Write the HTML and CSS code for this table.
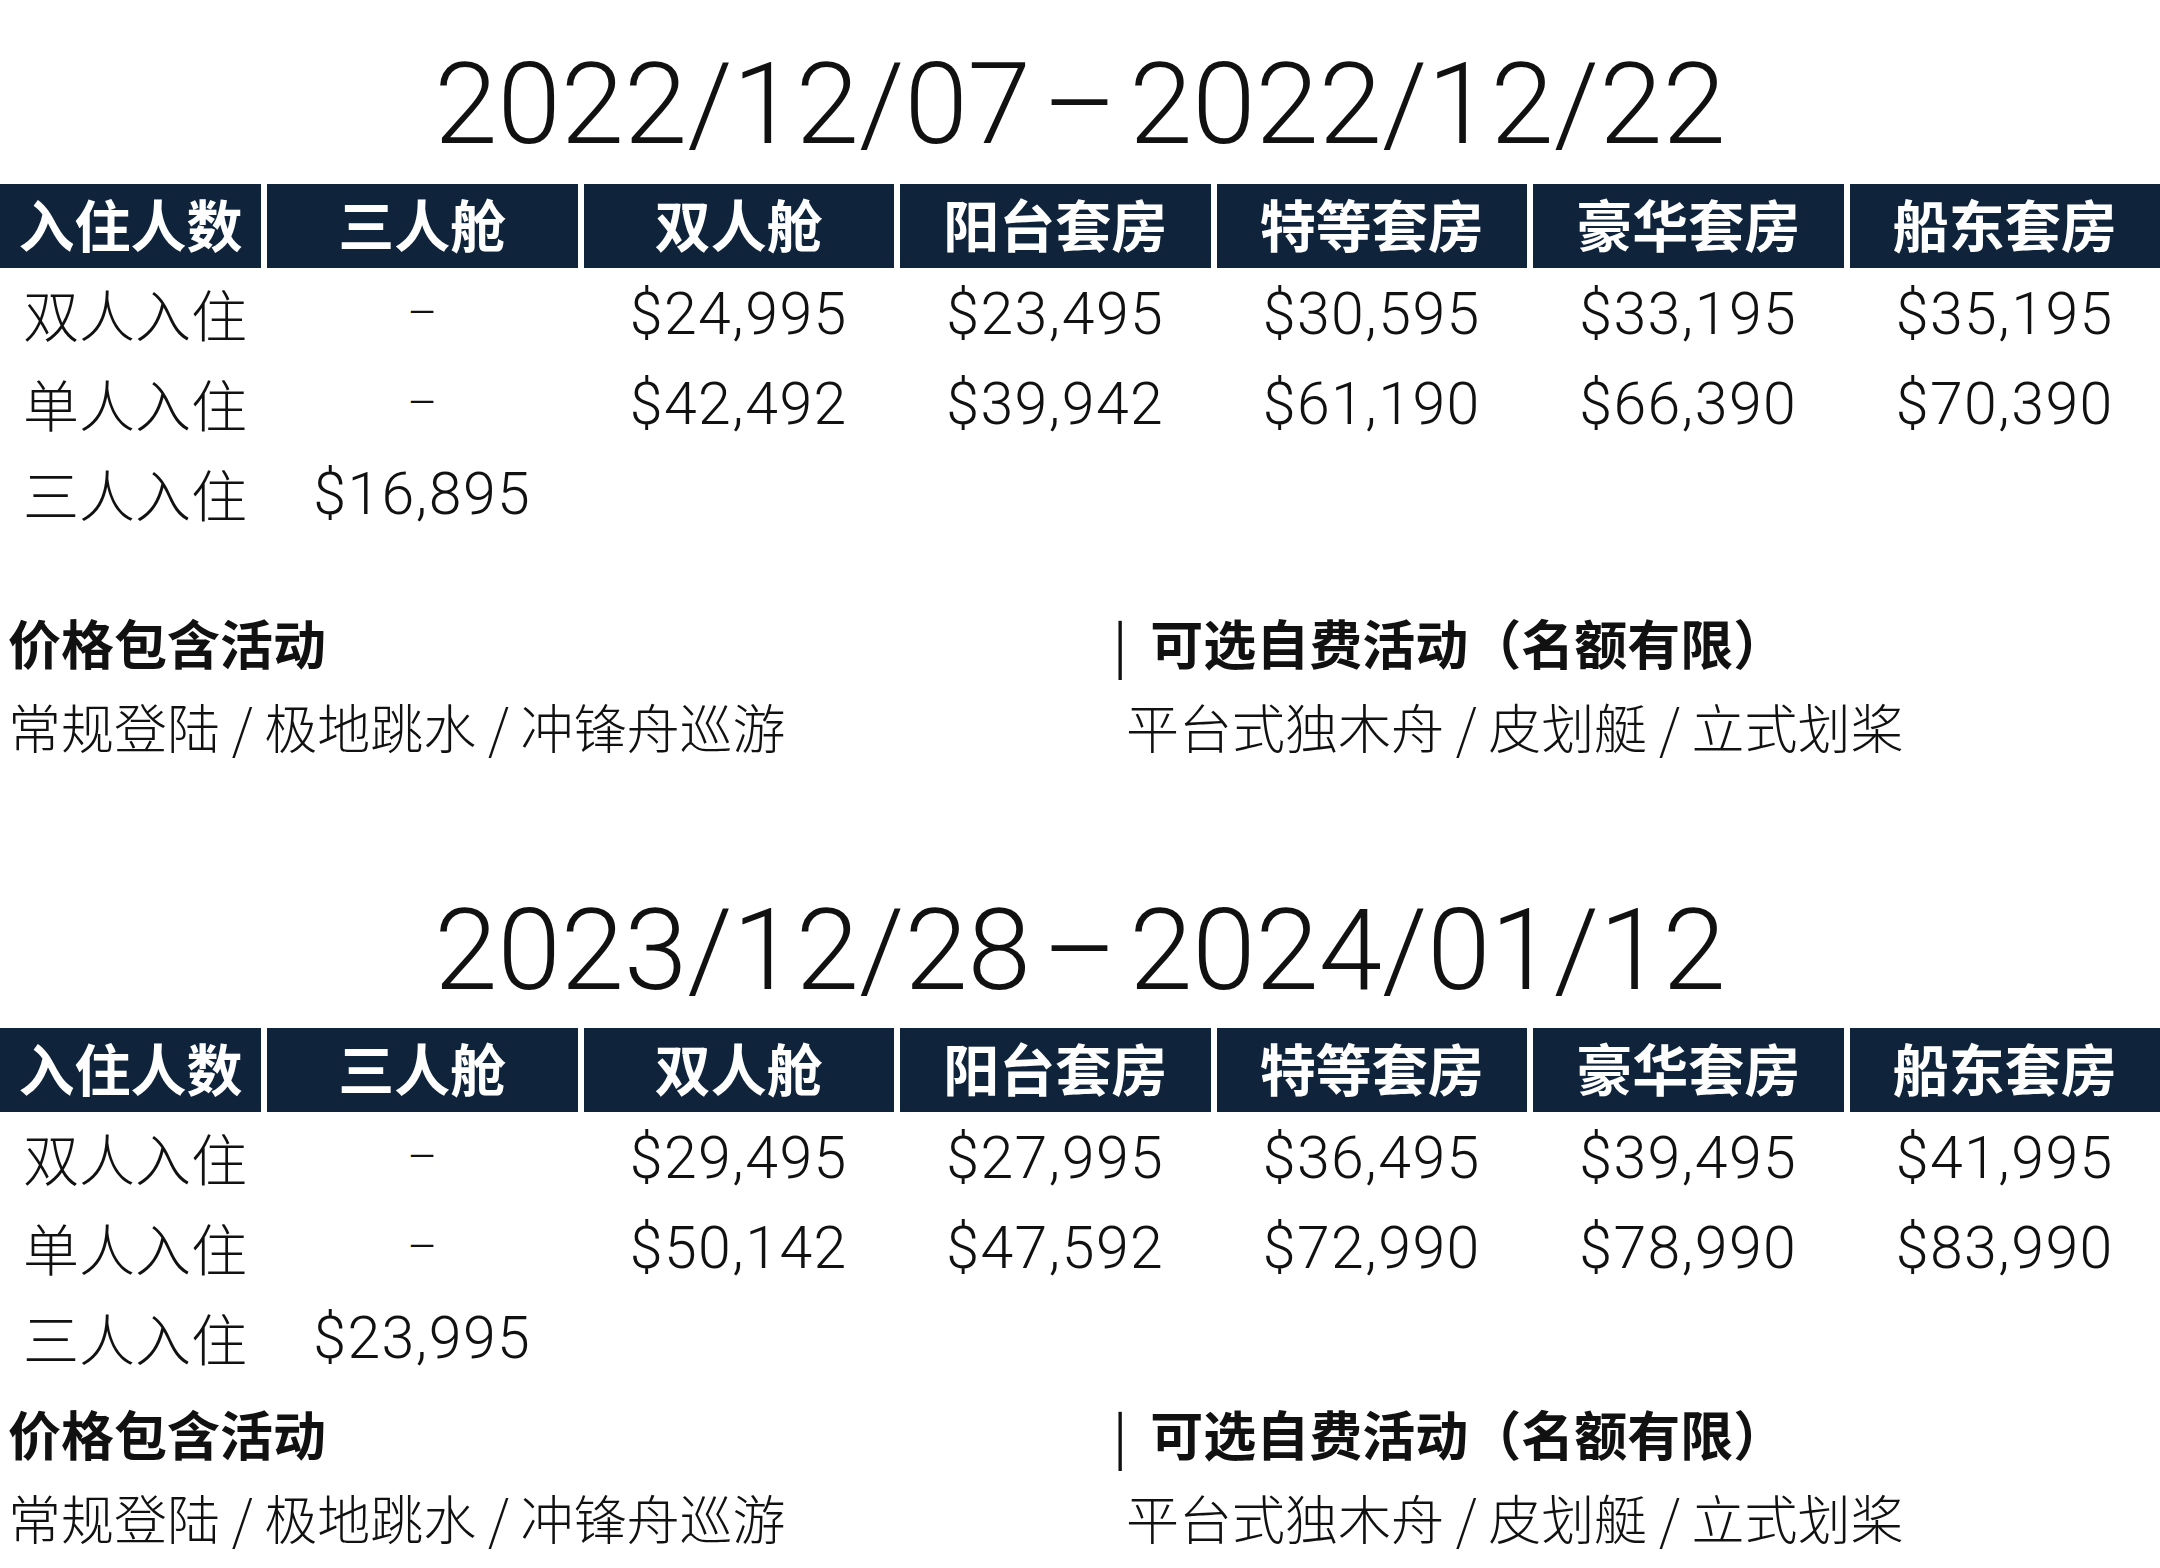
FILE: index.html
```html
<!DOCTYPE html>
<html lang="zh-CN">
<head>
<meta charset="utf-8">
<title>价格表</title>
<link rel="stylesheet" href="styles.css">
</head>
<body>
<section class="block">
  <h1 class="title">2022/12/07<span class="dash">–</span>2022/12/22</h1>
  <div class="table">
    <div class="row head">
      <div class="cell">入住人数</div>
      <div class="cell">三人舱</div>
      <div class="cell">双人舱</div>
      <div class="cell">阳台套房</div>
      <div class="cell">特等套房</div>
      <div class="cell">豪华套房</div>
      <div class="cell">船东套房</div>
    </div>
    <div class="row">
      <div class="cell label">双人入住</div>
      <div class="cell none">–</div>
      <div class="cell">$24,995</div>
      <div class="cell">$23,495</div>
      <div class="cell">$30,595</div>
      <div class="cell">$33,195</div>
      <div class="cell">$35,195</div>
    </div>
    <div class="row">
      <div class="cell label">单人入住</div>
      <div class="cell none">–</div>
      <div class="cell">$42,492</div>
      <div class="cell">$39,942</div>
      <div class="cell">$61,190</div>
      <div class="cell">$66,390</div>
      <div class="cell">$70,390</div>
    </div>
    <div class="row">
      <div class="cell label">三人入住</div>
      <div class="cell">$16,895</div>
    </div>
  </div>
  <div class="acts acts-first">
    <div class="act">
      <h2>价格包含活动</h2>
      <p>常规登陆 / 极地跳水 / 冲锋舟巡游</p>
    </div>
    <div class="act act-right">
      <h2><span class="bar">|</span>可选自费活动（名额有限）</h2>
      <p>平台式独木舟 / 皮划艇 / 立式划桨</p>
    </div>
  </div>
</section>

<section class="block">
  <h1 class="title">2023/12/28<span class="dash">–</span>2024/01/12</h1>
  <div class="table">
    <div class="row head">
      <div class="cell">入住人数</div>
      <div class="cell">三人舱</div>
      <div class="cell">双人舱</div>
      <div class="cell">阳台套房</div>
      <div class="cell">特等套房</div>
      <div class="cell">豪华套房</div>
      <div class="cell">船东套房</div>
    </div>
    <div class="row">
      <div class="cell label">双人入住</div>
      <div class="cell none">–</div>
      <div class="cell">$29,495</div>
      <div class="cell">$27,995</div>
      <div class="cell">$36,495</div>
      <div class="cell">$39,495</div>
      <div class="cell">$41,995</div>
    </div>
    <div class="row">
      <div class="cell label">单人入住</div>
      <div class="cell none">–</div>
      <div class="cell">$50,142</div>
      <div class="cell">$47,592</div>
      <div class="cell">$72,990</div>
      <div class="cell">$78,990</div>
      <div class="cell">$83,990</div>
    </div>
    <div class="row">
      <div class="cell label">三人入住</div>
      <div class="cell">$23,995</div>
    </div>
  </div>
  <div class="acts acts-second">
    <div class="act">
      <h2>价格包含活动</h2>
      <p>常规登陆 / 极地跳水 / 冲锋舟巡游</p>
    </div>
    <div class="act act-right">
      <h2><span class="bar">|</span>可选自费活动（名额有限）</h2>
      <p>平台式独木舟 / 皮划艇 / 立式划桨</p>
    </div>
  </div>
</section>
</body>
</html>
```

FILE: styles.css
```css
html, body {
  margin: 0;
  padding: 0;
  background: #ffffff;
}

body {
  width: 2160px;
  color: #111111;
  font-family: "Roboto", "Noto Sans CJK SC", sans-serif;
  overflow: hidden;
}

.block + .block {
  margin-top: 76px;
}

.title {
  margin: 0;
  height: 160px;
  padding-top: 24px;
  display: flex;
  align-items: center;
  justify-content: center;
  font-family: "Roboto", sans-serif;
  font-weight: 300;
  font-size: 114px;
  line-height: 1;
  color: #111111;
}

.block + .block .title {
  height: 156px;
  padding-top: 28px;
}

.dash {
  padding: 0 12px;
}

.row {
  display: grid;
  grid-template-columns: 261px repeat(6, 1fr);
  grid-template-rows: 90px;
  column-gap: 6px;
  height: 90px;
}

.row.head {
  grid-template-rows: 84px;
  height: 84px;
}

.cell {
  display: flex;
  align-items: center;
  justify-content: center;
  font-family: "Roboto", "Noto Sans CJK SC", sans-serif;
  font-weight: 300;
  font-size: 59px;
  line-height: 1;
  letter-spacing: 1.5px;
  white-space: nowrap;
}

.cell.none {
  font-size: 46px;
  letter-spacing: 0;
}

.head .cell {
  background: #0f243b;
  color: #ffffff;
  font-family: "Noto Sans CJK SC", sans-serif;
  font-weight: 700;
  font-size: 56px;
  letter-spacing: 0;
  padding-bottom: 6px;
}

.cell.label {
  justify-content: flex-start;
  padding-left: 23px;
  font-family: "Noto Sans CJK SC", sans-serif;
  font-weight: 300;
  font-size: 56px;
  letter-spacing: 0;
}

.acts {
  display: grid;
  grid-template-columns: 1113px 1fr;
}

.acts-first {
  margin-top: 62px;
}

.acts-second {
  margin-top: 9px;
}

.act h2,
.act p {
  margin: 0;
  height: 84px;
  display: flex;
  align-items: center;
  font-family: "Noto Sans CJK SC", sans-serif;
  font-size: 53px;
  white-space: pre;
  padding-left: 8px;
}

.act h2 {
  font-weight: 700;
}

.act p {
  font-weight: 300;
}

.act-right h2 {
  padding-left: 0;
}

.act-right p {
  padding-left: 13px;
}

.bar {
  font-weight: 400;
  margin-right: 23px;
}
```
